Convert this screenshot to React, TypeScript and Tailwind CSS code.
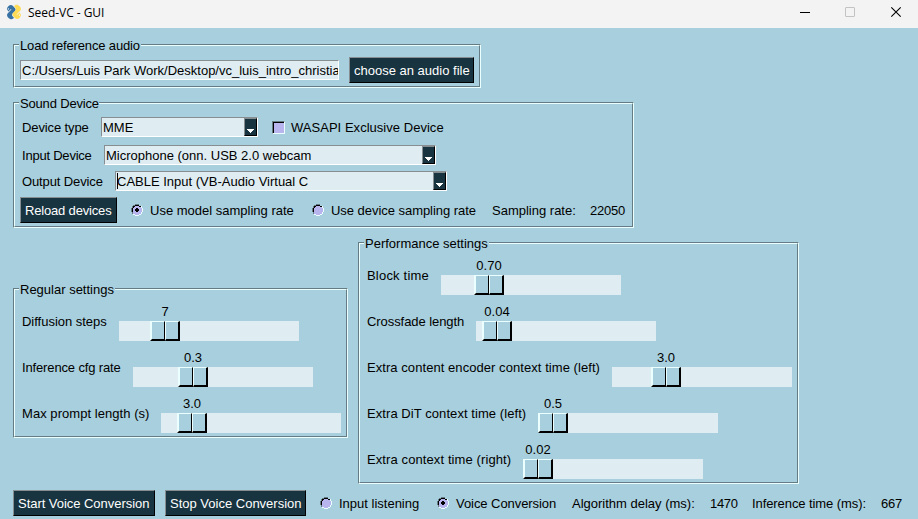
import React from "react";

const SUNKEN =
  "border border-t-[#868e91] border-l-[#868e91] border-b-white border-r-white bg-[#dfedf2]";

function Frame({
  title,
  legend,
  className = "",
  body = "",
  children,
}: {
  title: string;
  legend: string;
  className?: string;
  body?: string;
  children: React.ReactNode;
}) {
  return (
    <section
      className={`relative shrink-0 border border-t-[#657c85] border-l-[#657c85] border-b-[#ebffff] border-r-[#ebffff] ${className}`}
    >
      <div
        className={`h-full border border-t-[#ebffff] border-l-[#ebffff] border-b-[#657c85] border-r-[#657c85] ${body}`}
      >
        {children}
      </div>
      <h2
        className={`absolute left-[5px] top-[-7px] h-[15px] bg-[#a8cfdd] pl-px ${legend}`}
      >
        {title}
      </h2>
    </section>
  );
}

function Button({ className, children }: { className: string; children: React.ReactNode }) {
  return (
    <button
      className={`flex h-[26px] shrink-0 items-start border border-t-[#868e91] border-l-[#868e91] border-b-black border-r-black bg-[#183440] pt-[5px] pl-1 text-left leading-[15px] text-white ${className}`}
    >
      {children}
    </button>
  );
}

function Combo({ value, className, caret = false }: { value: string; className: string; caret?: boolean }) {
  return (
    <div className={`flex h-5 shrink-0 ${SUNKEN} ${className}`}>
      <div className="relative flex-1 pt-[2px] pl-px">
        <span>{value}</span>
        {caret && <i className="absolute top-px left-px h-4 w-px bg-black" />}
      </div>
      <div className="flex w-[13px] justify-center border border-t-[#868e91] border-l-[#868e91] border-r-black border-b-black bg-[#183440] pt-[10px]">
        <svg width="7" height="4" viewBox="0 0 7 4" shapeRendering="crispEdges">
          <path d="M0 0h7v1h-1v1h-1v1h-1v1h-1v-1h-1v-1h-1v-1h-1z" fill="#fff" />
        </svg>
      </div>
    </div>
  );
}

function Radio({ checked = false }: { checked?: boolean }) {
  return (
    <svg className="shrink-0" width="12" height="12" viewBox="0 0 12 12" shapeRendering="crispEdges">
      <path d="M4 1h4v1h2v2h1v4h-1v2h-2v1h-4v-1h-2v-2h-1v-4h1v-2h2z" fill="#b8b5ee" />
      <path d="M4 0h4v1h-4zM2 1h2v1h-2zM1 2h1v2h-1zM0 4h1v4h-1zM1 8h1v2h-1z" fill="#657c85" />
      <path d="M4 1h4v1h2v1h-2v-1h-4v1h-1v1h-1v4h-1v-4h1v-2h2z" fill="#000" />
      <path d="M10 2h1v2h1v4h-1v2h-1v1h-2v1h-4v-1h-2v-1h2v1h4v-1h2v-2h1v-4h-1z" fill="#ebffff" />
      {checked && <path d="M5 4h2v1h1v2h-1v1h-2v-1h-1v-2h1z" fill="#000" />}
    </svg>
  );
}

function SliderRow({
  label,
  value,
  offset,
  labelClass,
}: {
  label: string;
  value: string;
  offset: number;
  labelClass: string;
}) {
  return (
    <div className="flex h-[37px]">
      <span className={`shrink-0 pt-[10px] ${labelClass}`}>{label}</span>
      <div className="w-[180px] shrink-0">
        <div className="flex h-[17px] w-[30px] justify-center" style={{ marginLeft: offset }}>
          {value}
        </div>
        <div className="h-5 bg-[#dfedf2]">
          <div className="flex h-5 w-[30px] bg-[#a8cfdd]" style={{ marginLeft: offset }}>
            <div className="w-[15px] border-t border-r border-b-2 border-l-2 border-t-[#ebffff] border-r-black border-b-black border-l-[#ebffff]" />
            <div className="w-[15px] border-t border-r-2 border-b-2 border-l border-t-[#ebffff] border-r-black border-b-black border-l-[#ebffff]" />
          </div>
        </div>
      </div>
    </div>
  );
}

const regular = [
  { label: "Diffusion steps", value: "7", offset: 31, labelClass: "w-[97px] tracking-[-0.02px]" },
  { label: "Inference cfg rate", value: "0.3", offset: 45, labelClass: "w-[111px] tracking-[-0.14px]" },
  { label: "Max prompt length (s)", value: "3.0", offset: 16, labelClass: "w-[139px] tracking-[0.05px]" },
];

const performance = [
  { label: "Block time", value: "0.70", offset: 33, labelClass: "w-[74px] tracking-[0.2px]" },
  { label: "Crossfade length", value: "0.04", offset: 6, labelClass: "w-[109px] tracking-[-0.07px]" },
  { label: "Extra content encoder context time (left)", value: "3.0", offset: 39, labelClass: "w-[245px] tracking-[0.06px]" },
  { label: "Extra DiT context time (left)", value: "0.5", offset: 0, labelClass: "w-[171px] tracking-[0.07px]" },
  { label: "Extra context time (right)", value: "0.02", offset: 0, labelClass: "w-[156px] tracking-[0.1px]" },
];

export default function App() {
  return (
    <div className="h-[519px] w-[918px] overflow-hidden bg-[#a8cfdd] font-['Liberation_Sans',Arial,sans-serif] text-[13px] leading-[15px] whitespace-nowrap text-black">
      <header className="flex h-7 items-center bg-[#f3f3f3] pl-[6px]">
        <svg className="-mt-1" width="16" height="16" viewBox="0 0 16 16">
          <g transform="rotate(-45 8 8)">
            <path d="M4.500 3.200C4.500 1 6 0 8 0s3.500 1 3.500 3.100v2.600c0 1.500-1 2.300-2.400 2.300H6.300C4.800 8 4 9 4 10.300v1.700H2.500C.8 11.700 0 10 0 8s1-3.500 2.800-3.600H8v-.7H4.500z" fill="#3872a3" />
            <path d="M11.500 12.800c0 2.200-1.500 3.200-3.500 3.200s-3.500-1-3.500-3.100v-2.600C4.500 8.800 5.500 8 6.900 8h2.800c1.500 0 2.300-1 2.300-2.300V4h1.500c1.700.3 2.500 2 2.500 4s-1 3.500-2.800 3.600H8v.7h3.500z" fill="#ffdc55" />
            <circle cx="6.300" cy="2" r=".6" fill="#fff" />
            <circle cx="9.700" cy="14" r=".6" fill="#fff" />
          </g>
        </svg>
        <h1 className="mt-[-3px] ml-[6px] flex-1 font-['Open_Sans','Noto_Sans',sans-serif] text-[12px] tracking-[-0.04px]">Seed-VC - GUI</h1>
        <svg width="118" height="28" viewBox="0 0 118 28" fill="none">
          <path d="M0 12.500h10" stroke="#000" />
          <rect x="45.500" y="7.500" width="9" height="9" rx=".5" stroke="#c3c3c3" />
          <path d="M91.300 7.300l9.400 9.400M100.700 7.300l-9.400 9.400" stroke="#000" strokeWidth="1.100" />
        </svg>
      </header>

      <main className="pt-4 pl-[13px]">
        <Frame title="Load reference audio" legend="w-[122px] tracking-[-0.15px]" className="h-11 w-[468px]" body="flex pl-[5px]">
          <div className={`mt-[14px] h-5 w-[319px] shrink-0 overflow-hidden pt-[2px] pl-px ${SUNKEN}`}>
            C:/Users/Luis Park Work/Desktop/vc_luis_intro_christia
          </div>
          <Button className="mt-[11px] ml-[10px] w-[125px]">choose an audio file</Button>
        </Frame>

        <Frame title="Sound Device" legend="w-[80px] tracking-[-0.17px]" className="mt-[14px] h-[126px] w-[621px]" body="pt-[13px] pl-[5px]">
          <div className="flex h-5 pl-[2px]">
            <span className="w-[79px] pt-[3px] tracking-[-0.12px]">Device type</span>
            <Combo className="w-[157px]" value="MME" />
            <i className="mt-1 ml-[14px] flex h-[13px] w-[13px] border border-t-[#657c85] border-r-[#ebffff] border-b-[#ebffff] border-l-[#657c85]">
              <i className="flex-1 border-t border-l border-black bg-[#b8b5ee]" />
            </i>
            <span className="ml-[6px] pt-[3px] tracking-[0.03px]">WASAPI Exclusive Device</span>
          </div>
          <div className="mt-2 flex h-5 pl-[2px]">
            <span className="w-[82px] pt-[3px] tracking-[-0.22px]">Input Device</span>
            <Combo className="w-[332px]" value="Microphone (onn. USB 2.0 webcam" />
          </div>
          <div className="mt-[6px] flex h-5 pl-[2px]">
            <span className="w-[93px] pt-[3px] tracking-[-0.12px]">Output Device</span>
            <Combo className="w-[332px]" value="CABLE Input (VB-Audio Virtual C" caret />
          </div>
          <div className="mt-[6px] flex h-[26px] items-center">
            <Button className="w-[97px] tracking-[-0.17px]">Reload devices</Button>
            <span className="flex w-[195px] items-center gap-[7px] pl-[14px]"><Radio checked />Use model sampling rate</span>
            <span className="flex w-[180px] items-center gap-[7px] tracking-[-0.04px]"><Radio />Use device sampling rate</span>
            <span className="w-[98px]">Sampling rate:</span>
            <span className="tracking-[-0.25px]">22050</span>
          </div>
        </Frame>

        <div className="mt-[14px] flex items-center gap-[10px]">
          <Frame title="Regular settings" legend="w-[96px]" className="h-[150px] w-[335px]" body="flex flex-col gap-[9px] pt-[14px] pl-[7px]">
            {regular.map((s) => <SliderRow key={s.label} {...s} />)}
          </Frame>
          <Frame title="Performance settings" legend="w-[125px]" className="h-[242px] w-[441px]" body="flex flex-col gap-[9px] pt-[14px] pl-[7px]">
            {performance.map((s) => <SliderRow key={s.label} {...s} />)}
          </Frame>
        </div>

        <footer className="mt-[6px] flex h-[26px] items-center">
          <Button className="w-[142px] tracking-[-0.04px]">Start Voice Conversion</Button>
          <Button className="ml-[10px] w-[141px]">Stop Voice Conversion</Button>
          <span className="ml-[14px] flex w-[117px] items-center gap-[7px]"><Radio />Input listening</span>
          <span className="flex w-[135px] items-center gap-[7px] tracking-[-0.06px]"><Radio checked />Voice Conversion</span>
          <span className="w-[138px]">Algorithm delay (ms):</span>
          <span className="w-[42px] tracking-[-0.3px]">1470</span>
          <span className="w-[129px] tracking-[-0.08px]">Inference time (ms):</span>
          <span className="tracking-[-0.2px]">667</span>
        </footer>
      </main>
    </div>
  );
}
